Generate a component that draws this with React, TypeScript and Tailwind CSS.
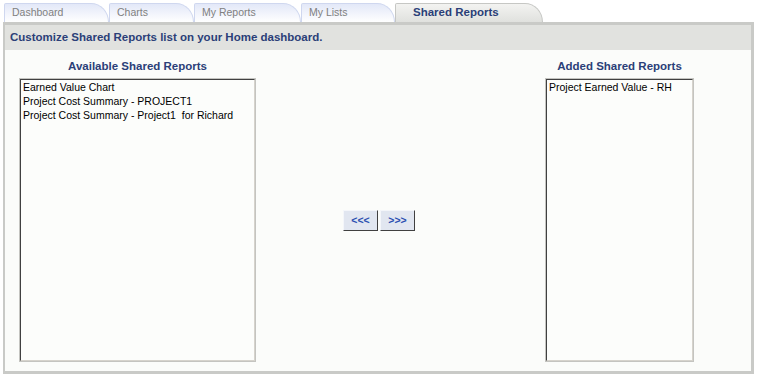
import React from "react";

const tabs = [
  { label: "Dashboard", width: "w-[105px]" },
  { label: "Charts", width: "w-[85px]" },
  { label: "My Reports", width: "w-[107px]" },
  { label: "My Lists", width: "w-[94px]" },
];

const available = [
  "Earned Value Chart",
  "Project Cost Summary - PROJECT1",
  "Project Cost Summary - Project1  for Richard",
];

const added = ["Project Earned Value - RH"];

function ListBox({ items, width }: { items: string[]; width: string }) {
  return (
    <div className={`${width} h-[284px] border border-[#c4c4c0]`}>
      <div className="h-full border border-t-[#404040] border-l-[#404040] border-b-[#d6d3cc] border-r-[#d6d3cc] bg-[#fcfdfb] pl-[2px]">
        {items.map((it) => (
          <div key={it} className="text-[10.5px] leading-[14px] text-black whitespace-pre">
            {it}
          </div>
        ))}
      </div>
    </div>
  );
}

function ArrowButton({ label }: { label: string }) {
  return (
    <button
      type="button"
      className="w-[35px] h-[21px] bg-[#e1e6f0] border border-t-[#f4f6fa] border-l-[#f4f6fa] border-b-[#404040] border-r-[#404040] text-[10.5px] font-bold text-[#2a4fb0] leading-none"
    >
      {label}
    </button>
  );
}

export default function App() {
  return (
    <div className="w-[757px] h-[378px] bg-white font-['Liberation_Sans',Arial,sans-serif] pt-[3px]">
      {/* tab strip */}
      <div className="flex pl-[4px] h-[19px]">
        {tabs.map((t) => (
          <div
            key={t.label}
            className={`${t.width} h-[19px] shrink-0 border border-b-0 border-[#cfd7ef] rounded-tl-[2px] rounded-tr-[18px_19px] bg-gradient-to-b from-[#e3e8f8] to-white pl-[7px] text-[10.5px] leading-[17px] text-[#808080]`}
          >
            {t.label}
          </div>
        ))}
        <div className="w-[148px] h-[19px] shrink-0 border border-b-0 border-[#c6c7c4] rounded-tl-[2px] rounded-tr-[18px_19px] bg-gradient-to-b from-[#f3f3f1] to-[#e0e1de] pl-[17px] text-[11.5px] font-bold leading-[17px] text-[#2b3f78]">
          Shared Reports
        </div>
      </div>

      {/* panel */}
      <div className="ml-[3px] w-[751px] h-[352px] border-[#c9cac7] border-t-[3px] border-l-[2px] border-r-[3px] border-b-[3px] bg-[#fbfcfa] flex flex-col">
        <div className="h-[25px] bg-[#e1e2df] pl-[5px] text-[11.5px] font-bold leading-[25px] text-[#2b3f78]">
          Customize Shared Reports list on your Home dashboard.
        </div>
        <div className="flex pl-[14px] pt-[9px]">
          <div className="flex flex-col items-center w-[237px]">
            <div className="text-[11.5px] font-bold leading-[14px] text-[#2b3f78] mb-[5px]">
              Available Shared Reports
            </div>
            <ListBox items={available} width="w-[237px]" />
          </div>
          <div className="w-[289px] pl-[87px] pt-[19px] flex items-center gap-[2px]">
            <ArrowButton label="<<<" />
            <ArrowButton label=">>>" />
          </div>
          <div className="flex flex-col items-center w-[149px]">
            <div className="text-[11.5px] font-bold leading-[14px] text-[#2b3f78] mb-[5px] whitespace-nowrap">
              Added Shared Reports
            </div>
            <ListBox items={added} width="w-[149px]" />
          </div>
        </div>
      </div>
    </div>
  );
}
